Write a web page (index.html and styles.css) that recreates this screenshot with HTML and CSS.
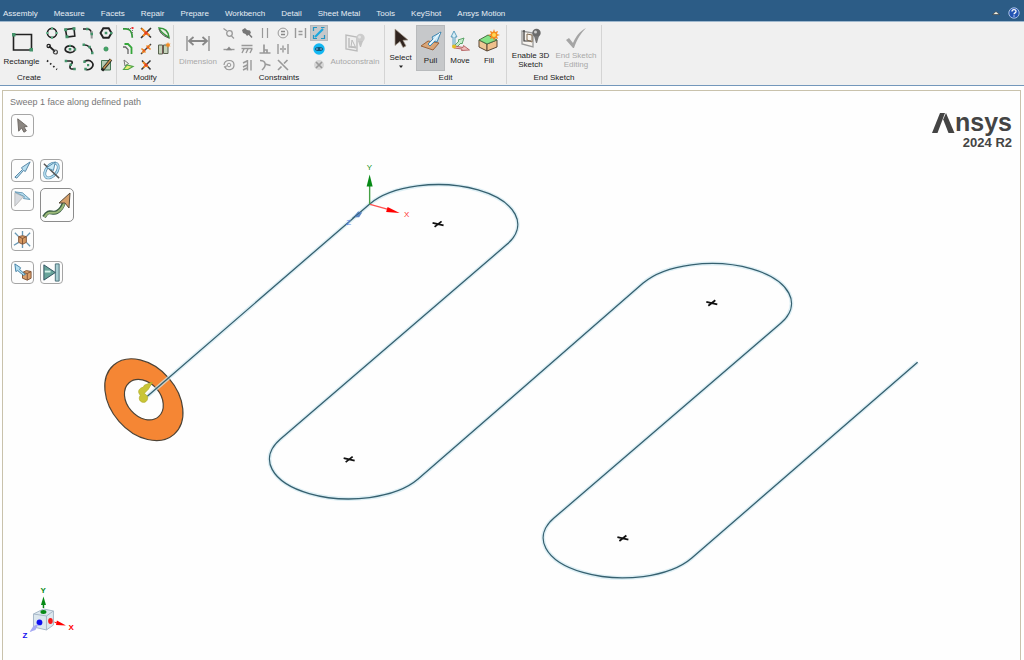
FILE: index.html
```html
<!DOCTYPE html>
<html lang="en">
<head>
    <meta charset="UTF-8">
    <meta name="viewport" content="width=device-width, initial-scale=1.0">
    <title>Ansys Discovery - Pull</title>
    <link rel="stylesheet" href="styles.css">
</head>
<body>
    <nav class="tabs">
        <button class="tab">Assembly</button>
        <button class="tab">Measure</button>
        <button class="tab">Facets</button>
        <button class="tab">Repair</button>
        <button class="tab">Prepare</button>
        <button class="tab">Workbench</button>
        <button class="tab">Detail</button>
        <button class="tab">Sheet Metal</button>
        <button class="tab">Tools</button>
        <button class="tab">KeyShot</button>
        <button class="tab">Ansys Motion</button>
        <div class="tabs-right">
            <button class="tab-icon" aria-label="Collapse ribbon">
                <svg width="8" height="8" viewBox="0 0 8 8"><path d="M.5 5.500 4 2.500l3.500 3z" fill="#f4f4e8" stroke="#333" stroke-width=".6"/></svg>
            </button>
            <button class="tab-icon" aria-label="Help">
                <svg width="12" height="12" viewBox="0 0 12 12"><circle cx="6" cy="6" r="5.200" fill="#2454b4" stroke="#a9c0e4"/><path d="M4 4.600c0-2.600 4-2.600 4-.2C8 6 6 5.800 6 7.300M6 8.400v1.200" fill="none" stroke="#fff" stroke-width="1.300"/></svg>
            </button>
        </div>
    </nav>

    <header class="ribbon">
        <section class="group group-create">
            <div class="group-body">
                <button class="big big-rectangle">
                    <svg width="24" height="22" viewBox="0 0 24 22"><path d="M3.500 3.500h18v15.500h-18z" fill="none" stroke="#222" stroke-width="1.600"/><path d="M2 2h3.500v3.500H2zM19.500 17H23v3.500h-3.500z" fill="#43936a"/></svg>
                    <span>Rectangle</span>
                </button>
                <div class="small-grid cols-4">
                    <button class="small" aria-label="Circle"><svg viewBox="0 0 14 14"><circle cx="7" cy="7" r="4.600" fill="none" stroke="#222" stroke-width="1.600"/><path d="M6 1.200h2v2.200H6zM6 10.500h2v2.200H6zM1.200 6h2.200v2H1.200zM10.500 6h2.200v2h-2.200z" fill="#5fb088"/></svg></button>
                    <button class="small" aria-label="Three-point rectangle"><svg viewBox="0 0 14 14"><path d="m2.500 3.500 8.500-1 .8 7.500-8 1z" fill="none" stroke="#222" stroke-width="1.600"/><path d="M1.200 2.200h3v3h-3zM9.500 1.200h3v3h-3zM2.500 9.300h3v3h-3z" fill="#43936a"/></svg></button>
                    <button class="small" aria-label="Tangent arc"><svg viewBox="0 0 14 14"><path d="M2 3h4c3 0 4.500 2 4.700 5" fill="none" stroke="#222" stroke-width="1.600"/><path d="M10.700 5v7.500" stroke="#999" stroke-width="2"/><path d="M5 1.800h2.400v2.400H5zM9.500 6.800H12v2.400H9.500z" fill="#43936a"/></svg></button>
                    <button class="small" aria-label="Polygon"><svg viewBox="0 0 14 14"><path d="M4.300 2.200h5.400L12.500 7l-2.800 4.800H4.300L1.500 7z" fill="none" stroke="#222" stroke-width="1.900"/><path d="M5.700 5.700h2.600v2.600H5.700zM11 6h2.300v2.300H11z" fill="#43936a"/></svg></button>
                    <button class="small" aria-label="Tangent line"><svg viewBox="0 0 14 14"><path d="m4 4 6 5.500" stroke="#222" stroke-width="1.700"/><circle cx="3.700" cy="4" r="1.700" fill="none" stroke="#222" stroke-width="1.200"/><circle cx="10.400" cy="10" r="2" fill="none" stroke="#444" stroke-width="1.200"/></svg></button>
                    <button class="small" aria-label="Ellipse"><svg viewBox="0 0 14 14"><ellipse cx="7" cy="7.200" rx="4.800" ry="3.400" fill="none" stroke="#222" stroke-width="1.800"/><path d="M5.700 6h2.600v2.600H5.700zM6 2.700h2v2H6zM11 6.200h2.200v2.200H11z" fill="#43936a"/></svg></button>
                    <button class="small" aria-label="Three-point arc"><svg viewBox="0 0 14 14"><path d="M2.500 2.800c5 .2 8 3.500 8.800 8.200" fill="none" stroke="#222" stroke-width="1.600"/><path d="M1.500 1.600h2.500v2.500H1.500zM7.300 3.800h2.500v2.500H7.300zM10 9.800h2.500v2.500H10z" fill="#43936a"/></svg></button>
                    <button class="small" aria-label="Point"><svg viewBox="0 0 14 14"><circle cx="7" cy="7" r="2.100" fill="#43a866" stroke="#28804a" stroke-width=".7"/></svg></button>
                    <button class="small" aria-label="Construction line"><svg viewBox="0 0 14 14"><path d="m2 2.500 10 9" stroke="#222" stroke-width="1.700" stroke-dasharray="1.600 2.600"/></svg></button>
                    <button class="small" aria-label="Spline"><svg viewBox="0 0 14 14"><path d="M3 3h4.500c2.500 0 2 2 .5 3.500S6.500 11 8.500 11H12" fill="none" stroke="#222" stroke-width="1.700"/><path d="M1.700 1.800h2.500v2.500H1.700zM6.500 5.500H9V8H6.500zM10.300 9.800h2.500v2.500h-2.500z" fill="#43936a"/></svg></button>
                    <button class="small" aria-label="Sweep arc"><svg viewBox="0 0 14 14"><path d="M3.500 3.500c6-3.500 11 2.500 6.800 6.700-1.600 1.600-4 1.800-5.800 1" fill="none" stroke="#222" stroke-width="1.700"/><path d="M2.300 2.500h2.400v2.400H2.300zM6 6h2.200v2.200H6zM3.300 9.800h2.400v2.400H3.300z" fill="#43936a"/></svg></button>
                    <button class="small" aria-label="Face curve"><svg viewBox="0 0 14 14"><path d="M2.500 2.500h9v9.500h-9z" fill="#b4ccb4" stroke="#447755"/><path d="m3 12.500 9-11" stroke="#222" stroke-width="3"/><path d="m4.500 10.500 7.500-9" stroke="#c49350" stroke-width="1.500"/></svg></button>
                </div>
            </div>
            <h2 class="group-label">Create</h2>
        </section>

        <section class="group group-modify">
            <div class="group-body">
                <div class="small-grid cols-3">
                    <button class="small" aria-label="Rounded corner"><svg viewBox="0 0 14 14"><path d="M2 2.800h3c4 0 6 2 6.300 9" fill="none" stroke="#35963a" stroke-width="1.700"/><path d="M7 2.500h4.500V7" fill="none" stroke="#777" stroke-dasharray="1 1"/><path d="M10.500 1H12.500v2h-2z" fill="#e33"/></svg></button>
                    <button class="small" aria-label="Trim away"><svg viewBox="0 0 14 14"><path d="m2 2 10 9.500M2 12 12 2" stroke="#333" stroke-width="1.600"/><path d="m2.500 2.500 8 7M7 7 4 10" stroke="#f28b20" stroke-width="2"/><path d="M5.500 5.500h3v3h-3z" fill="#e83d21"/></svg></button>
                    <button class="small" aria-label="Project to sketch"><svg viewBox="0 0 14 14"><path d="M2 2c7 0 9.500 4 10 9.500C8 9 4 7 2 2z" fill="#e8eee4" stroke="#35963a" stroke-width="1.500"/><path d="M2 3c1 4 4 7 10 9" fill="none" stroke="#555"/></svg></button>
                    <button class="small" aria-label="Offset curve"><svg viewBox="0 0 14 14"><path d="M3.500 2h3.500l3.500 3.500V12" fill="none" stroke="#35a63a" stroke-width="1.800"/><path d="M2 5h2.500L7 7.500V12" fill="none" stroke="#666" stroke-width="1.300"/></svg></button>
                    <button class="small" aria-label="Split curve"><svg viewBox="0 0 14 14"><path d="m2 12 10-10" stroke="#444" stroke-width="1.500"/><path d="m2.500 6.500 4 4M7.500 3.500l4 4M3 11l3-3M8 6l3-3" stroke="#f28b20" stroke-width="1.600"/><path d="M8 4.500h2v2H8zM4 7.500h2v2H4z" fill="#e8571e"/></svg></button>
                    <button class="small" aria-label="Bend"><svg viewBox="0 0 14 14"><path d="M1.500 3h4v9h-4zM6.500 3H11v8.500H6.500z" fill="#c5d2ba" stroke="#58634e"/><path d="M5.500 3v9" stroke="#755"/><path d="m11 0 .8 1.700 1.700-.2-1 1.500 1 1.500-1.700-.2L11 6l-.8-1.700-1.700.2 1-1.500-1-1.500 1.700.2z" fill="#f28b20"/></svg></button>
                    <button class="small" aria-label="Scale sketch"><svg viewBox="0 0 14 14"><path d="m3 2 4.500 3.500L4 8z" fill="#f5f5ee" stroke="#777"/><path d="M2.500 11.500 6 7l6 1.500-5 3z" fill="#e9ed76" stroke="#52a648" stroke-width="1.200"/></svg></button>
                    <button class="small" aria-label="Create corner"><svg viewBox="0 0 14 14"><path d="m3 2.500 8.500 9M2.500 11.500l9-9" stroke="#333" stroke-width="1.500"/><path d="m4 4 5 5M4.500 9.500 7 7" stroke="#f28b20" stroke-width="1.800"/><path d="M5.700 5.700h2.600v2.600H5.700z" fill="#e83d21"/></svg></button>
                </div>
            </div>
            <h2 class="group-label">Modify</h2>
        </section>

        <section class="group group-constraints">
            <div class="group-body">
                <button class="big big-dimension" disabled>
                    <svg width="24" height="20" viewBox="0 0 24 20"><path d="M1 3v15M23 3v15" stroke="#909090" stroke-width="1.400"/><path d="M4 8h16" stroke="#888" stroke-width="2"/><path d="M7.500 4 3 8l4.500 4M16.500 4 21 8l-4.500 4" fill="none" stroke="#888" stroke-width="1.800"/></svg>
                    <span>Dimension</span>
                </button>
                <div class="small-grid cols-6">
                    <button class="small" aria-label="Inspect" disabled><svg viewBox="0 0 14 14"><circle cx="7.500" cy="7.500" r="2.800" fill="none" stroke="#999" stroke-width="1.300"/><path d="M1.500 2.500 5 5M9.500 10l2.500 2.500" stroke="#999" stroke-width="1.200"/></svg></button>
                    <button class="small" aria-label="Fixed" disabled><svg viewBox="0 0 14 14"><path d="m2 4 3-2 2 2 3 .5 1 2.500-4 3-1.500-2L3 7z" fill="#777"/><path d="m8 7 4 4.500" stroke="#777" stroke-width="1.500"/></svg></button>
                    <button class="small" aria-label="Parallel" disabled><svg viewBox="0 0 14 14"><path d="M4.500 2v10M9.500 2v10" stroke="#999" stroke-width="1.200"/></svg></button>
                    <button class="small" aria-label="Equal radius" disabled><svg viewBox="0 0 14 14"><circle cx="7" cy="7" r="4.900" fill="none" stroke="#999"/><path d="M5 5.500h4M5 8.500h4" stroke="#888" stroke-width="1.400"/></svg></button>
                    <button class="small" aria-label="Equal distance" disabled><svg viewBox="0 0 14 14"><path d="M1.500 2v10M11.500 2v10M4.500 5.500h4M4.500 8.500h4" stroke="#999" stroke-width="1.400"/></svg></button>
                    <button class="small active" aria-label="Sketch inferencing"><svg viewBox="0 0 14 14"><path d="M1.500 5V1.500H5M9 1.500h3.500M12.500 9v3.500H9M5 12.500H1.500V9" fill="none" stroke="#2596c4" stroke-width="1.200"/><path d="m3 11 8-8" stroke="#17a7df" stroke-width="2.200"/></svg></button>
                    <button class="small" aria-label="Horizontal" disabled><svg viewBox="0 0 14 14"><path d="M1.500 7.500h11" stroke="#999" stroke-width="1.400"/><path d="M4 8.300 7 4.500l3 3.800z" fill="#888"/></svg></button>
                    <button class="small" aria-label="Coincident surface" disabled><svg viewBox="0 0 14 14"><path d="M1.500 3.500h11M1.500 6.500h11M4 7l-2 4M8 7l-2 4M12 7l-2 4" stroke="#999" stroke-width="1.400"/></svg></button>
                    <button class="small" aria-label="Perpendicular" disabled><svg viewBox="0 0 14 14"><path d="M1.500 11h11M6 2.500V11M6 8h3v3" fill="none" stroke="#999" stroke-width="1.700"/></svg></button>
                    <button class="small" aria-label="Symmetric" disabled><svg viewBox="0 0 14 14"><path d="M2 2v10M12 2v10M7 3.500v7M4 7h2M8 7h2" stroke="#999" stroke-width="1.400"/></svg></button>
                    <span></span>
                    <button class="small" aria-label="Show constraints"><svg viewBox="0 0 14 14"><circle cx="7" cy="7" r="5.700" fill="#12b7f3"/><ellipse cx="7" cy="7" rx="4" ry="2" fill="#155876"/><path d="M5 6v2M9 6v2" stroke="#8be"/></svg></button>
                    <button class="small" aria-label="Concentric" disabled><svg viewBox="0 0 14 14"><path d="M2 7c.5-6 10-6 10 0 0 5.500-7 6-9 2.500M2 8.500l1.500 1 1-2" fill="none" stroke="#999" stroke-width="1.200"/><circle cx="7" cy="7" r="1.800" fill="none" stroke="#999"/></svg></button>
                    <button class="small" aria-label="Vertical" disabled><svg viewBox="0 0 14 14"><path d="M11 2v10.500M7.500 2v10.500M3 5l4-2M3 9l4-2M3 12l4-2" stroke="#999" stroke-width="1.400"/></svg></button>
                    <button class="small" aria-label="Tangent" disabled><svg viewBox="0 0 14 14"><path d="M2 2.500c6 0 7 5 2 9.500M7 6l5.500 1.500" fill="none" stroke="#999" stroke-width="1.500"/></svg></button>
                    <button class="small" aria-label="Equal length" disabled><svg viewBox="0 0 14 14"><path d="m2 2 10 10M8 5.500 11.500 2M2 12l3.500-3.500" stroke="#999" stroke-width="1.600"/></svg></button>
                    <span></span>
                    <button class="small" aria-label="Delete constraint" disabled><svg viewBox="0 0 14 14"><circle cx="7" cy="7" r="5" fill="#d6d6d6"/><path d="m4 4 6 6M10 4l-6 6" stroke="#999" stroke-width="1.700"/></svg></button>
                </div>
                <button class="big big-auto" disabled>
                    <svg width="22" height="22" viewBox="0 0 22 22"><path d="M2 3v14l11 2V5zM5 6v9h6" fill="#eee" stroke="#bbb" stroke-width="1.400"/><path d="m7 15 1-7 4 8z" fill="none" stroke="#bbb"/><circle cx="16.500" cy="6" r="4.200" fill="#ccc"/><circle cx="15.500" cy="5" r="1.500" fill="#e6e6e6"/><path d="M14 9h5l-2 6h-1z" fill="#c4c4c4"/></svg>
                    <span>Autoconstrain</span>
                </button>
            </div>
            <h2 class="group-label">Constraints</h2>
        </section>

        <section class="group group-edit">
            <div class="group-body">
                <button class="big big-select">
                    <svg width="20" height="22" viewBox="0 0 20 22"><path d="m4 1 13 11-5 .3 3 5.700-3 1.500-3-6-5 4z" fill="#30241f" stroke="#a89c8e" stroke-width=".7"/></svg>
                    <span>Select</span>
                    <svg width="6" height="4" viewBox="0 0 6 4"><path d="M1 .5h4L3 3z" fill="#222"/></svg>
                </button>
                <button class="big big-pull active">
                    <svg width="24" height="24" viewBox="0 0 24 24"><path d="m2 17 7-5 11 2-6 7z" fill="#d9a577" stroke="#9a643c"/><path d="m9 15 5-5-1-2 9-5-4 10-2-1-5 5z" fill="#c6e7f7" stroke="#4187b1"/><path d="M21 4 10.500 15.500" stroke="#fff"/></svg>
                    <span>Pull</span>
                </button>
                <button class="big big-move">
                    <svg width="24" height="24" viewBox="0 0 24 24"><path d="M5 17V8H3l3-6 3 6H7v9" fill="#d8eef7" stroke="#408bb0" stroke-width=".8"/><path d="m7 16 4-4-1-1 6-2-2 6-1-1-4 4" fill="#c5ebcc" stroke="#419450" stroke-width=".8"/><path d="m7 17 8 1.500.5-2 6 4.500-8 .5.500-1.500-8-1" fill="#f0bcbc" stroke="#aa4b4b" stroke-width=".8"/><circle cx="6" cy="17.500" r="2" fill="#e3bd22"/></svg>
                    <span>Move</span>
                </button>
                <button class="big big-fill">
                    <svg width="24" height="24" viewBox="0 0 24 24"><path d="m2 11 8 4v7l-8-4z" fill="#efc794" stroke="#5b4734"/><path d="m10 15 10-4v7l-10 4z" fill="#efc08c" stroke="#5b4734"/><path d="m2 11 9-5 9 5-10 4z" fill="#84e386" stroke="#4b7044"/><path d="m17 0 1 3 3-1-1 3 3 1-3 1 1 3-3-1-1 3-1-3-3 1 1-3-3-1 3-1-1-3 3 1z" fill="#f58b1e"/><circle cx="17" cy="6" r="2" fill="#ffda55"/></svg>
                    <span>Fill</span>
                </button>
            </div>
            <h2 class="group-label">Edit</h2>
        </section>

        <section class="group group-end">
            <div class="group-body">
                <button class="big big-enable">
                    <svg width="22" height="22" viewBox="0 0 22 22"><path d="M2 4v13l11 3V6z" fill="#f7f3ee" stroke="#999" stroke-width="1.300"/><path d="M4 3v11h7" fill="none" stroke="#333" stroke-width="1.200"/><path d="M7 7v6l5 2V8z" fill="none" stroke="#806a50"/><circle cx="16.500" cy="6" r="4.200" fill="#6b6b6b"/><circle cx="15.500" cy="5" r="1.500" fill="#ccc"/><path d="M14 9h5l-2 7h-1z" fill="#777"/></svg>
                    <span>Enable 3D<br>Sketch</span>
                </button>
                <button class="big big-finish" disabled>
                    <svg width="22" height="22" viewBox="0 0 22 22"><path d="m1 13 3-2 4 5C11 9 15 4 21 1c-5 5-9 11-12 20H8z" fill="#a5a5a5"/></svg>
                    <span>End Sketch<br>Editing</span>
                </button>
            </div>
            <h2 class="group-label">End Sketch</h2>
        </section>
    </header>

    <main class="canvas">
        <svg class="scene" viewBox="2.500 90.500 1018 569" preserveAspectRatio="xMinYMin meet" role="img" aria-label="Sweep path">
            <!-- face to sweep -->
            <g transform="translate(143.500 399.500) rotate(49)">
                <path class="face" fill-rule="evenodd" d="M-46 0a46 33 0 1 0 92 0a46 33 0 1 0-92 0zM-22.500 0a22.500 16.800 0 1 0 45 0a22.500 16.800 0 1 0-45 0z"/>
            </g>
            <!-- trajectory -->
            <path class="path-glow" d="M147 396 369 204A79.500 39.700 0 0 1 507 244L280 439A79.500 39.700 0 0 0 418 479L643 283A79.500 39.700 0 0 1 781 323L554 518A79.500 39.700 0 0 0 692 558L918 362"/>
            <path class="path-line" d="M147 396 369 204A79.500 39.700 0 0 1 507 244L280 439A79.500 39.700 0 0 0 418 479L643 283A79.500 39.700 0 0 1 781 323L554 518A79.500 39.700 0 0 0 692 558L918 362"/>
            <!-- arc centres -->
            <path class="cross" d="m432.500 222.500 11 2.500m-9 1.500 7-5.500M343.500 458l11 2.500m-9 1.500 7-5.500M706.500 301.500l11 2.500m-9 1.500 7-5.500M617.500 537l11 2.500m-9 1.500 7-5.500"/>
            <!-- pull arrow -->
            <path d="m152 382-8 3-1 2c-5 1-6 5-3 8-2 3-1 6 2 7 4 1 6-3 5-6l-3-3 4-4z" fill="#c9c536" stroke="#b2ad2a" stroke-width=".8"/>
            <!-- origin -->
            <path d="M369.500 204v-20" stroke="#45a045" stroke-width="1.400"/>
            <path d="m369.500 174 3 12h-6z" fill="#078a16"/>
            <path d="m370 204 18 5" stroke="#ff5050" stroke-width="1.400"/>
            <path d="m399.500 212.500-13.500-1 1.500-5z" fill="#f00"/>
            <path d="m353 217 5-6 4 1-3 5z" fill="#5b86c4"/>
            <path d="m352 218 8-6" stroke="#36606f"/>
            <text class="origin-label" x="366.500" y="169.500" fill="#1a951a">Y</text>
            <text class="origin-label" x="404" y="217" fill="#f33">X</text>
            <text class="origin-label" x="346" y="225" fill="#5b7ee0">Z</text>
            <!-- view triad -->
            <path d="m33 614 10-5 10 2v14l-7 5-13-3z" fill="#dce7ee" stroke="#a7b8c8"/>
            <path d="m33 614 13 2 7-5m-7 5v14" fill="none" stroke="#a7b8c8"/>
            <path d="M43 608v-5" stroke="#078a16" stroke-width="1.500"/>
            <path d="m43 596.500 2.500 8.500h-5z" fill="#078a16"/>
            <ellipse cx="43" cy="612" rx="3" ry="2" fill="#078a16"/>
            <circle cx="39" cy="622.500" r="2.900" fill="#1010f0"/>
            <ellipse cx="50" cy="621" rx="2.300" ry="3" fill="#f51a1a"/>
            <path d="m54 621.500 2 1 .5-2 9 5-10-.5.500-1.500-2-1z" fill="#f00"/>
            <path d="m29 632 4-6 5-2-3 6z" fill="#a6a9f3"/>
            <text class="triad-label" x="40" y="593" fill="#078a16">Y</text>
            <text class="triad-label" x="68" y="630" fill="#f00">X</text>
            <text class="triad-label" x="22" y="638" fill="#1010f0">Z</text>
        </svg>

        <p class="hint">Sweep 1 face along defined path</p>

        <div class="palette">
            <div class="palette-row row-select">
                <button class="tool" aria-label="Select"><svg viewBox="0 0 22 22"><path d="m6 4 10 8-3.500.5 2.500 4-2.500 1.500-2.500-4.500L7 17z" fill="#8b8681" stroke="#6d6864"/></svg></button>
            </div>
            <div class="palette-row">
                <button class="tool" aria-label="Pull direction"><svg viewBox="0 0 22 22"><path d="m3 18 8-8-1-2 9-6-5 10-2-1-7 8z" fill="#b8dff0" stroke="#5282a3"/></svg></button>
                <button class="tool" aria-label="Revolve"><svg viewBox="0 0 22 22"><ellipse cx="11" cy="11" rx="9" ry="5.500" transform="rotate(-50 11 11)" fill="none" stroke="#5b8fae" stroke-width="3"/><ellipse cx="11" cy="11" rx="9" ry="5.500" transform="rotate(-50 11 11)" fill="none" stroke="#b9e0f2" stroke-width="1.500"/><path d="m3 4 16 15" stroke="#555" stroke-width="1.500"/><path d="m6 8 9-6-2 9z" fill="#c8e9f7" stroke="#5389aa"/></svg></button>
            </div>
            <div class="palette-row">
                <button class="tool" aria-label="Draft"><svg viewBox="0 0 22 22"><path d="M3 4v14l9-10z" fill="#d8dbe0" stroke="#bbb"/><path d="m3 3 8 1 8 7-7-1 1-2-6-3z" fill="#b8dff0" stroke="#6898b5"/></svg></button>
                <button class="tool tool-large" aria-label="Sweep"><svg viewBox="0 0 32 32"><path d="M3 28c5-9 8-2 13-5 5-3 6-6 7-10" fill="none" stroke="#3b5e45" stroke-width="4"/><path d="M3.500 28c5-8 8-2 13-5 5-3 6-6 7-10" fill="none" stroke="#9cba79" stroke-width="2"/><path d="m18 14 11-10-1 15-4-5z" fill="#d59f6a" stroke="#594b3b"/></svg></button>
            </div>
            <div class="palette-row">
                <button class="tool" aria-label="Scale body"><svg viewBox="0 0 22 22"><path d="M3 4l4 4M11 2v5M19 4l-4 4M2 17l5-3M11 20v-4M19 18l-4-4" stroke="#6898b5" stroke-width="1.400"/><path d="m7 8 4-1 4 1v6l-4 2-4-2z" fill="#d69962" stroke="#805337"/><path d="m7 8 4 2 4-2m-4 2v6" fill="none" stroke="#805337"/></svg></button>
            </div>
            <div class="palette-row row-last">
                <button class="tool" aria-label="Up to origin"><svg viewBox="0 0 22 22"><path d="m11 11 4-2 5 1v7l-4 2-5-2z" fill="#dba06c" stroke="#805337"/><path d="m11 11 5 1 4-2m-4 2v7" fill="none" stroke="#805337"/><path d="m3 2 6 4-1 2 6 5-2 1-6-5-2 1z" fill="#b4dff1" stroke="#4380a5"/></svg></button>
                <button class="tool" aria-label="Up to"><svg viewBox="0 0 22 22"><path d="M15 2h4v18h-4z" fill="#a7ced2" stroke="#486e78"/><path d="M3 3v16l12-8z" fill="#68a49a" stroke="#31525f"/><path d="M4 10h6" stroke="#d4f1e8" stroke-width="2"/></svg></button>
            </div>
        </div>

        <div class="brand">
            <div class="brand-name">
                <svg width="23" height="20" viewBox="0 0 23 20" role="img" aria-label="A"><path d="M8 0h5L5.500 20H0z" fill="#444"/><path d="M14 0 22.500 20h-6L11.200 6.500z" fill="#444"/></svg>
                <span>nsys</span>
            </div>
            <div class="brand-version">2024 R2</div>
        </div>
    </main>
</body>
</html>
```
FILE: styles.css
```css
* {
    box-sizing: border-box;
}

body {
    margin: 0;
    height: 100vh;
    display: flex;
    flex-direction: column;
    overflow: hidden;
    background-color: #fff;
    font-family: "Liberation Sans", Arial, sans-serif;
    font-size: 8px;
    line-height: 9px;
    color: #222;
}

button {
    margin: 0;
    padding: 0;
    border: none;
    background: none;
    font: inherit;
    color: inherit;
}

svg {
    display: block;
}

/* Tab strip */
.tabs {
    display: flex;
    align-items: center;
    gap: 16px;
    height: 21px;
    padding: 5px 4px 0 3px;
    background-color: #2c5c86;
    color: #e8eef4;
}

.tabs-right {
    display: flex;
    align-items: center;
    gap: 8px;
    margin-left: auto;
}

/* Ribbon */
.ribbon {
    display: flex;
    height: 65px;
    padding: 3px 0 1px;
    border-top: 1px solid #9fb8ce;
    border-bottom: 1px solid #7397bb;
    background-color: #f0f0f0;
}

.group {
    display: flex;
    flex-direction: column;
    border-right: 1px solid #d4d4d4;
}

.group-create { width: 117px; }
.group-modify { width: 57px; }
.group-constraints { width: 211px; }
.group-edit { width: 122px; }
.group-end { width: 95px; }

.group-body {
    display: flex;
    flex: 1;
}

.group-label {
    margin: 0;
    padding-bottom: 2px;
    font-size: 8px;
    line-height: 9px;
    font-weight: normal;
    text-align: center;
}

.group-create .group-label {
    padding-right: 58px;
}

.small-grid {
    display: grid;
    grid-auto-rows: 16px;
    height: 48px;
}

.cols-3 { grid-template-columns: repeat(3, 18px); padding-left: 2px; }
.cols-4 { grid-template-columns: repeat(4, 18px); }
.cols-6 { grid-template-columns: repeat(6, 18px); }

.small {
    display: flex;
    align-items: center;
    justify-content: center;
}

.small svg {
    width: 14px;
    height: 14px;
}

.active {
    background-color: #c6c8ca;
    outline: 1px solid #b8babc;
    outline-offset: -1px;
}

.big {
    display: flex;
    flex-direction: column;
    align-items: center;
    padding-top: 2px;
    gap: 1px;
}

.big:disabled {
    color: #a8a8a8;
}

.big-rectangle { width: 43px; padding-top: 6px; gap: 4px; }
.big-dimension { width: 46px; padding: 8px 0 0 2px; gap: 4px; }
.big-auto { width: 54px; padding-top: 7px; gap: 3px; }
.big-select { width: 31px; gap: 3px; padding-top: 3px; }
.big-pull { width: 29px; height: 46px; padding-top: 4px; gap: 3px; }
.big-move { width: 30px; padding-top: 4px; gap: 3px; }
.big-fill { width: 28px; padding-top: 4px; gap: 3px; }
.big-enable { width: 47px; gap: 2px; }
.big-finish { width: 44px; gap: 2px; }

/* Drawing area */
.canvas {
    position: relative;
    flex: 1;
    margin: 4px 3px 0 2px;
    border: 1px solid #c9c2ac;
    border-bottom: none;
    background-color: #fefefe;
    overflow: hidden;
}

.scene {
    width: 100%;
}

.face {
    fill: #f58634;
    stroke: #4d4336;
    stroke-width: 1.2;
}

.path-glow {
    fill: none;
    stroke: #cfe8f1;
    stroke-opacity: 0.7;
    stroke-width: 4;
}

.path-line {
    fill: none;
    stroke: #36606f;
    stroke-width: 1.3;
}

.cross {
    fill: none;
    stroke: #111;
    stroke-width: 1.8;
}

.origin-label {
    font-size: 8px;
}

.triad-label {
    font-size: 8px;
    font-weight: bold;
}

.hint {
    position: absolute;
    top: 6px;
    left: 7px;
    margin: 0;
    font-size: 9px;
    line-height: 10px;
    color: #777;
}

.palette {
    position: absolute;
    top: 23px;
    left: 8px;
    display: flex;
    flex-direction: column;
    gap: 6px;
}

.palette-row {
    display: flex;
    align-items: flex-start;
    gap: 6px;
}

.row-select {
    padding-bottom: 16px;
}

.row-last {
    padding-top: 4px;
}

.tool {
    width: 23px;
    height: 23px;
    border: 1px solid #a5a5a5;
    border-radius: 4px;
    background-color: #fdfdfd;
}

.tool-large {
    width: 34px;
    height: 34px;
    border-color: #8c8c8c;
    border-radius: 5px;
}

.brand {
    position: absolute;
    top: 19px;
    right: 8px;
    display: flex;
    flex-direction: column;
    align-items: flex-end;
    color: #444;
    font-weight: bold;
}

.brand-name {
    display: flex;
    align-items: center;
    font-size: 25px;
    line-height: 25px;
}

.brand-version {
    font-size: 13px;
    line-height: 15px;
}
```
